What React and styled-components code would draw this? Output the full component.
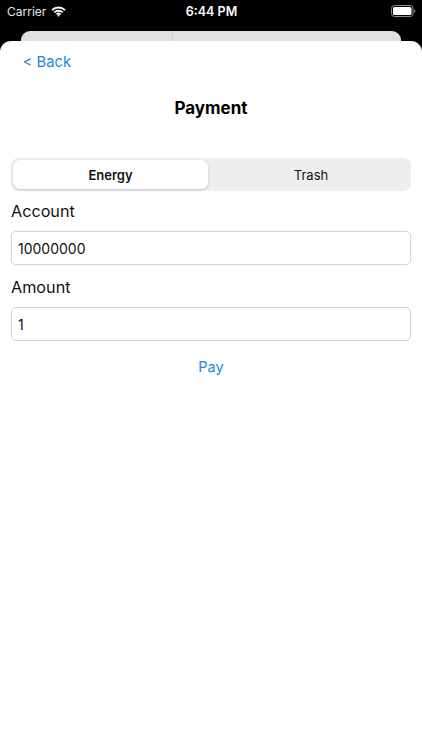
import React from "react";
import styled, { createGlobalStyle } from "styled-components";

const Global = createGlobalStyle`
  html, body { margin: 0; padding: 0; background: #000; }
  body { font-family: Inter, "Liberation Sans", sans-serif; -webkit-font-smoothing: antialiased; }
  * { box-sizing: border-box; }
`;

const Screen = styled.div`
  width: 422px;
  height: 750px;
  background: #000;
  display: flex;
  flex-direction: column;
  overflow: hidden;
`;

const StatusBar = styled.div`
  height: 31px;
  flex: none;
  padding: 0 6px 9px 7px;
  display: grid;
  grid-template-columns: 1fr auto 1fr;
  align-items: center;
  color: #fff;
`;

const StatusLeft = styled.div`
  display: flex;
  align-items: center;
  gap: 5px;
  font-size: 12px;
  color: #e8e8e8;
`;

const Clock = styled.div`
  font-size: 12.5px;
  font-weight: 600;
`;

const StatusRight = styled.div`
  display: flex;
  justify-content: flex-end;
`;

const BehindCard = styled.div`
  height: 10px;
  flex: none;
  margin: 0 21px;
  background: #e0e0e0;
  border-radius: 9px 9px 0 0;
  display: grid;
  grid-template-columns: 151px 1px 1fr;
`;

const BehindDivider = styled.div`
  grid-column: 2;
  background: #cfcfcf;
`;

const Sheet = styled.div`
  flex: 1;
  background: #fff;
  border-radius: 11px 11px 0 0;
  padding: 0 11px;
  display: flex;
  flex-direction: column;
`;

const BackLink = styled.div`
  margin: 11px 0 0 11.5px;
  height: 20px;
  line-height: 20px;
  font-size: 14.8px;
  color: #2b84dc;
`;

const Title = styled.h1`
  margin: 25px 0 0;
  height: 22px;
  line-height: 22px;
  font-size: 17px;
  font-weight: 700;
  text-align: center;
  color: #000;
`;

const Segments = styled.div`
  margin-top: 39px;
  height: 33px;
  padding: 2px;
  background: #eeeef0;
  border-radius: 8px;
  display: grid;
  grid-template-columns: 195px 1fr;
  column-gap: 5px;
`;

const Segment = styled.div`
  display: flex;
  align-items: center;
  justify-content: center;
  font-size: 13px;
  font-weight: ${(p) => (p.$active ? 600 : 400)};
  color: #111;
  border-radius: 7px;
  background: ${(p) => (p.$active ? "#fff" : "transparent")};
  box-shadow: ${(p) => (p.$active ? "0 1px 3px rgba(0,0,0,0.18)" : "none")};
`;

const Label = styled.label`
  display: block;
  margin-top: ${(p) => p.$top}px;
  height: 20px;
  line-height: 20px;
  font-size: 16.2px;
  color: #111;
`;

const Field = styled.input`
  display: block;
  width: 100%;
  height: 34px;
  margin-top: 10px;
  padding: 0 6px;
  border: 1.5px solid #d2d2d4;
  border-radius: 5px;
  background: #fff;
  font: 400 14px Inter, "Liberation Sans", sans-serif;
  color: #111;
  outline: none;
`;

const PayButton = styled.button`
  display: block;
  margin: 15px auto 0;
  padding: 0;
  height: 20px;
  line-height: 20px;
  border: 0;
  background: none;
  font: 400 14.5px Inter, "Liberation Sans", sans-serif;
  color: #2b84dc;
`;

const Wifi = () => (
  <svg width="15" height="11" viewBox="0 0 15 11" fill="none" stroke="#fff" strokeWidth="1.9">
    <path d="M1 4.1a9.4 9.4 0 0 1 13 0" />
    <path d="M3.3 6.4a6.1 6.1 0 0 1 8.4 0" />
    <path d="M5.5 8.4a3 3 0 0 1 4 0" />
    <circle cx="7.5" cy="9.7" r="0.9" fill="#fff" stroke="none" />
  </svg>
);

const Battery = () => (
  <svg width="25" height="12" viewBox="0 0 25 12" fill="none">
    <rect x="0.5" y="0.5" width="21.5" height="11" rx="3" stroke="#8e8e8e" />
    <rect x="2" y="2" width="18.5" height="8" rx="1.6" fill="#fff" />
    <path d="M23.2 4.2c.8.3 1.2 1 1.2 1.8s-.4 1.5-1.2 1.8z" fill="#8e8e8e" />
  </svg>
);

export default function App() {
  return (
    <Screen>
      <Global />
      <StatusBar>
        <StatusLeft>
          Carrier
          <Wifi />
        </StatusLeft>
        <Clock>6:44 PM</Clock>
        <StatusRight>
          <Battery />
        </StatusRight>
      </StatusBar>
      <BehindCard>
        <BehindDivider />
      </BehindCard>
      <Sheet>
        <BackLink>&lt; Back</BackLink>
        <Title>Payment</Title>
        <Segments>
          <Segment $active>Energy</Segment>
          <Segment>Trash</Segment>
        </Segments>
        <Label $top={10}>Account</Label>
        <Field defaultValue="10000000" />
        <Label $top={12}>Amount</Label>
        <Field defaultValue="1" />
        <PayButton>Pay</PayButton>
      </Sheet>
    </Screen>
  );
}
